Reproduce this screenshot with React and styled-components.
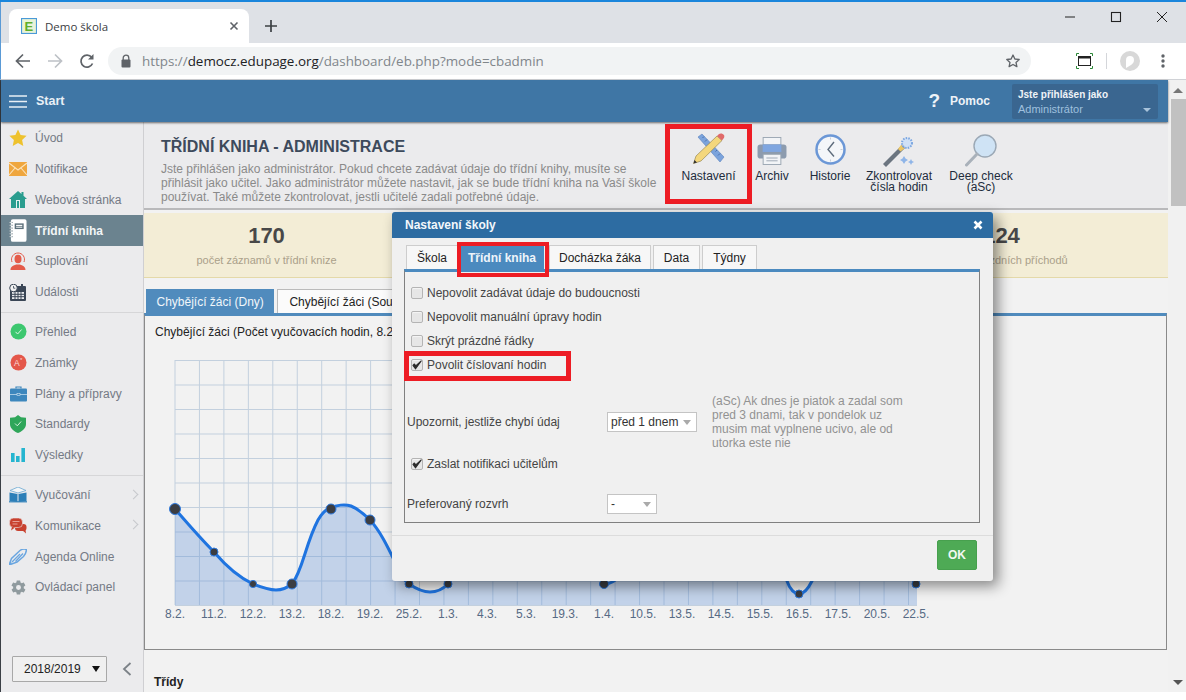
import React from "react";
import styled, { createGlobalStyle, css } from "styled-components";

const Global = createGlobalStyle`
  html, body { margin: 0; padding: 0; background: #fff; overflow: hidden; }
  * { box-sizing: border-box; }
  body { font-family: "Liberation Sans", Arial, sans-serif; font-size: 12px; color: #222; }
`;

const mark = css`
  position: relative;
  &::after {
    content: "";
    position: absolute;
    inset: ${(p) => p.$inset};
    border: ${(p) => p.$thick || "4.5px"} solid #ed1c24;
    pointer-events: none;
    z-index: 5;
  }
`;

const Root = styled.div`
  position: relative;
  width: 1186px;
  height: 692px;
  overflow: hidden;
  border-top: 2px solid #1a86dc;
  display: flex;
  flex-direction: column;
`;
const TabStrip = styled.div`
  height: 41px;
  flex: none;
  background: #dee1e6;
  border-left: 1px solid #5a9ad6;
  display: flex;
  align-items: flex-end;
  padding-left: 8px;
`;
const BrowserTab = styled.div`
  width: 240px;
  height: 34px;
  background: #fff;
  border-radius: 8px 8px 0 0;
  display: flex;
  align-items: center;
  padding: 0 10px 0 12px;
  font-family: "Open Sans", sans-serif;
  font-size: 11.5px;
  color: #3c4043;
  gap: 8px;
`;
const TabTitle = styled.span`
  flex: 1;
`;
const NewTab = styled.div`
  width: 44px;
  height: 34px;
  display: flex;
  align-items: center;
  justify-content: center;
`;
const WinControls = styled.div`
  margin-left: auto;
  height: 100%;
  display: flex;
  align-items: flex-start;
  padding-top: 8px;
`;
const WinButton = styled.div`
  width: ${(p) => p.$w}px;
  height: 14px;
  display: flex;
  align-items: center;
  justify-content: center;
`;
const BrowserBar = styled.div`
  height: 37px;
  flex: none;
  background: #fff;
  border-left: 1px solid #5a9ad6;
  border-bottom: 1px solid #d0d2d6;
  display: flex;
  align-items: center;
  padding-bottom: 1px;
`;
const NavButton = styled.div`
  width: 32px;
  height: 28px;
  display: flex;
  align-items: center;
  justify-content: center;
`;
const NavGroup = styled.div`
  display: flex;
  padding-left: 6px;
  margin-right: 5px;
`;
const Address = styled.div`
  width: 923px;
  height: 28px;
  background: #f1f3f4;
  border-radius: 14px;
  display: flex;
  align-items: center;
  padding: 0 10px 0 12px;
  font-family: "Open Sans", sans-serif;
  font-size: 13.4px;
  color: #80868b;
`;
const UrlText = styled.span`
  margin-left: 10px;
  flex: 1;
  white-space: nowrap;
`;
const UrlHost = styled.span`
  color: #202124;
`;
const ExtGroup = styled.div`
  display: flex;
  align-items: center;
  margin-left: 45px;
`;
const ExtDivider = styled.div`
  width: 1px;
  height: 16px;
  background: #d4d6da;
  margin: 0 13px 0 13px;
`;
const MenuDots = styled.span`
  display: flex;
  margin-left: 11px;
`;
const ViewRow = styled.div`
  flex: 1;
  min-height: 0;
  display: flex;
  border-left: 1px solid #3a3f45;
  border-bottom: 0;
`;
const Page = styled.div`
  flex: 1;
  min-width: 0;
  display: flex;
  flex-direction: column;
  background: #f2f2f2;
`;
const Header = styled.header`
  height: 42px;
  flex: none;
  background: #3f76a5;
  box-shadow: 0 1px 2px rgba(0, 0, 0, 0.55);
  display: flex;
  align-items: center;
  color: #fff;
  padding: 0 10px 0 8px;
  position: relative;
  z-index: 2;
`;
const Start = styled.div`
  margin-left: 9px;
  font-size: 12.5px;
  font-weight: bold;
  color: #e9f0f6;
`;
const Help = styled.div`
  margin-left: auto;
  display: flex;
  align-items: center;
  font-weight: bold;
  color: #eef3f8;
`;
const HelpMark = styled.span`
  font-size: 19px;
  margin-right: 10px;
`;
const UserBox = styled.div`
  width: 146px;
  height: 35px;
  margin-left: 22px;
  background: #3a6690;
  border-radius: 2px;
  padding: 4px 6px;
  position: relative;
  line-height: 14px;
`;
const UserTop = styled.div`
  font-size: 10px;
  font-weight: bold;
  color: #f0f4f8;
`;
const UserName = styled.div`
  font-size: 11px;
  color: #9fc0de;
  line-height: 15px;
`;
const UserCaret = styled.span`
  position: absolute;
  right: 7px;
  bottom: 7px;
  border: 4px solid transparent;
  border-top: 4px solid #a8c3db;
  border-bottom: 0;
`;
const Body = styled.div`
  flex: 1;
  min-height: 0;
  display: flex;
`;
const Sidebar = styled.nav`
  width: 143px;
  flex: none;
  background: #ebebed;
  border-right: 1px solid #cfcfd2;
  display: flex;
  flex-direction: column;
  padding-top: 0.8px;
`;
const NavItem = styled.div`
  height: 30.8px;
  display: flex;
  align-items: center;
  padding-left: 8px;
  gap: 8px;
  font-size: 12px;
  color: ${(p) => (p.$active ? "#f2f5f6" : "#747a85")};
  font-weight: ${(p) => (p.$active ? "bold" : "normal")};
  background: ${(p) => (p.$active ? "#6b838f" : "transparent")};
  position: relative;
`;
const NavIcon = styled.span`
  width: 18px;
  height: 18px;
  flex: none;
  display: flex;
  align-items: center;
  justify-content: center;
`;
const NavArrow = styled.span`
  position: absolute;
  left: 129px;
  top: 11px;
  width: 7px;
  height: 7px;
  border-top: 1px solid #c6c8cc;
  border-right: 1px solid #c6c8cc;
  transform: rotate(45deg);
`;
const NavRule = styled.div`
  height: 1px;
  margin: 4px 0;
  background: #d6d6d8;
`;
const YearRow = styled.div`
  margin-top: auto;
  padding: 0 0 10px 11px;
  display: flex;
  align-items: center;
`;
const YearSelect = styled.div`
  width: 95px;
  height: 26px;
  border: 1px solid #a8a8a8;
  border-radius: 1px;
  background: #f0f0f0;
  display: flex;
  align-items: center;
  justify-content: space-between;
  padding: 0 6px 0 11px;
  font-size: 12px;
  color: #222;
`;
const YearCaret = styled.span`
  border: 4px solid transparent;
  border-top: 6px solid #111;
  border-bottom: 0;
`;
const Collapse = styled.span`
  margin-left: 15px;
  display: flex;
`;
const Main = styled.main`
  flex: 1;
  min-width: 0;
  display: flex;
  flex-direction: column;
  overflow: hidden;
`;
const Head = styled.section`
  height: 88px;
  flex: none;
  display: flex;
  background: #ebebed;
  border-bottom: 2px solid #b9b9bb;
`;
const HeadText = styled.div`
  width: 521px;
  flex: none;
  padding: 16px 0 0 17px;
`;
const Title = styled.h1`
  margin: 0;
  font-size: 16px;
  line-height: 18px;
  font-weight: bold;
  color: #3d4a5c;
`;
const Desc = styled.p`
  margin: 6px 0 0;
  width: 500px;
  font-size: 12px;
  line-height: 14px;
  color: #8a8a8a;
`;
const Tools = styled.div`
  display: flex;
  align-items: flex-start;
`;
const Tool = styled.div`
  width: ${(p) => p.$w}px;
  height: 80px;
  margin-top: 2px;
  display: flex;
  flex-direction: column;
  align-items: center;
  padding-top: 7px;
  text-align: center;
  font-size: 12px;
  line-height: 11px;
  color: #222c3c;
  ${(p) => p.$marked && mark}
`;
const ToolIcon = styled.span`
  height: 36px;
  padding-top: ${(p) => p.$down || 0}px;
  display: flex;
  align-items: center;
  justify-content: center;
  margin-bottom: 4px;
`;
const StatBand = styled.section`
  margin-top: 3px;
  height: 65px;
  flex: none;
  background: #f3edd6;
  border-bottom: 1px solid #e4d9a9;
  display: grid;
  grid-template-columns: repeat(4, 245px);
`;
const Stat = styled.div`
  grid-column: ${(p) => p.$col};
  text-align: center;
  padding-top: 10px;
`;
const StatValue = styled.div`
  font-size: 22px;
  line-height: 26px;
  font-weight: bold;
  color: #484848;
`;
const StatLabel = styled.div`
  margin-top: 5px;
  padding-left: ${(p) => p.$shift || 0}px;
  font-size: 11px;
  line-height: 13px;
  color: #aaa08a;
`;
const PageTabs = styled.div`
  margin-top: 11px;
  height: 24px;
  flex: none;
  display: flex;
  padding-left: 2px;
  gap: 3px;
`;
const PageTab = styled.div`
  height: 24px;
  padding: 0 ${(p) => (p.$active ? "9.5px" : "11px")};
  display: flex;
  align-items: center;
  font-size: 12px;
  white-space: nowrap;
  color: ${(p) => (p.$active ? "#f1f6fa" : "#222")};
  background: ${(p) => (p.$active ? "#508bbd" : "#fbfbfb")};
  border: 1px solid ${(p) => (p.$active ? "#508bbd" : "#bbb")};
  border-bottom: 0;
`;
const ChartPanel = styled.section`
  height: 337px;
  flex: none;
  margin-right: 1px;
  border: 1px solid #8a8a8a;
  border-top: 3px solid #508bbd;
  background: #f2f2f2;
`;
const ChartTitle = styled.div`
  padding: 9px 0 0 10px;
  line-height: 14px;
  font-size: 12px;
  color: #222;
  white-space: nowrap;
`;
const ChartSvg = styled.svg`
  display: block;
  margin: 13px 0 0 20px;
`;
const SectionHead = styled.div`
  margin: 25px 0 0 10px;
  font-size: 12px;
  line-height: 14px;
  font-weight: bold;
  color: #222;
`;
const Scrollbar = styled.div`
  width: 18px;
  flex: none;
  background: #f1f1f1;
  display: flex;
  flex-direction: column;
  align-items: center;
  padding: 8px 0 7px;
`;
const ScrollUp = styled.span`
  border: 5px solid transparent;
  border-bottom: 5px solid #777;
  border-top: 0;
  margin-left: 2px;
`;
const ScrollDown = styled.span`
  border: 5px solid transparent;
  border-top: 5px solid #555;
  border-bottom: 0;
  margin: auto 0 0 2px;
`;
const ScrollThumb = styled.div`
  width: 15px;
  height: 107px;
  margin: 6px 0 0 3px;
  background: #c1c1c1;
`;
const Modal = styled.div`
  position: absolute;
  left: 392px;
  top: 210px;
  width: 601px;
  height: 369px;
  z-index: 10;
  background: #f0f0f0;
  border-radius: 3px;
  box-shadow: 5px 5px 14px rgba(0, 0, 0, 0.45);
  display: flex;
  flex-direction: column;
`;
const ModalHead = styled.div`
  height: 26px;
  flex: none;
  background: #2d6ca2;
  border-radius: 3px 3px 0 0;
  display: flex;
  align-items: center;
  justify-content: space-between;
  padding: 0 10px 0 13px;
  color: #f3f7fb;
  font-size: 12px;
  font-weight: bold;
`;
const ModalTabs = styled.div`
  display: flex;
  margin: 7px 0 0 14px;
  height: 24px;
  gap: 2px;
`;
const ModalTab = styled.div`
  width: ${(p) => p.$w}px;
  margin-left: ${(p) => p.$gap || 0}px;
  display: flex;
  align-items: center;
  justify-content: center;
  font-size: 12px;
  color: ${(p) => (p.$active ? "#eef4fa" : "#222")};
  font-weight: ${(p) => (p.$active ? "bold" : "normal")};
  background: ${(p) => (p.$active ? "#4b8abf" : "#f7f7f7")};
  border: 1px solid ${(p) => (p.$active ? "#4b8abf" : "#cdcdcd")};
  border-bottom: 0;
  ${(p) => p.$marked && mark}
`;
const ModalPanel = styled.div`
  margin: 0 13px 0 12px;
  height: 254px;
  flex: none;
  border: 1px solid #808080;
  border-top: 3px solid #4b8abf;
  padding: 9px 0 0 2px;
`;
const CheckRow = styled.div`
  height: 24px;
  margin-top: ${(p) => p.$top || 0}px;
  display: flex;
  align-items: center;
  padding-left: 4px;
  gap: 4px;
  color: #444;
  font-size: 12px;
  ${(p) => p.$marked && mark}
`;
const CheckBox = styled.span`
  width: 12px;
  height: 12px;
  flex: none;
  border: 1px solid #b4b4b4;
  border-radius: 2px;
  background: #e6e6e6;
  box-shadow: inset 0 1px 1px #f6f6f6;
  display: flex;
  align-items: center;
  justify-content: center;
`;
const FieldRow = styled.div`
  display: flex;
  align-items: center;
  margin-top: ${(p) => p.$top}px;
  color: #444;
`;
const FieldLabel = styled.div`
  width: 200px;
  flex: none;
  font-size: 12px;
`;
const Select = styled.div`
  width: ${(p) => p.$w}px;
  height: 20px;
  flex: none;
  background: #fff;
  border: 1px solid #c4c4c4;
  display: flex;
  align-items: center;
  justify-content: space-between;
  padding: 0 5px 0 3px;
  color: #333;
  font-size: 12px;
`;
const SelectCaret = styled.span`
  border: 4px solid transparent;
  border-top: 5px solid #aaa;
  border-bottom: 0;
`;
const Hint = styled.div`
  margin-left: 15px;
  width: 205px;
  font-size: 12px;
  line-height: 14px;
  color: #929292;
`;
const ModalFoot = styled.div`
  margin-top: 12px;
  flex: 1;
  border-top: 1px solid #dcdcdc;
  padding: 4px 16px 0 0;
  display: flex;
  justify-content: flex-end;
  align-items: flex-start;
`;
const OkButton = styled.div`
  width: 40px;
  height: 30px;
  background: #4eaa55;
  border: 1px solid #47a04e;
  border-radius: 2px;
  color: #f2f8f2;
  font-size: 12px;
  font-weight: bold;
  display: flex;
  align-items: center;
  justify-content: center;
`;

const Tick = () => (
  <svg width="10" height="10" viewBox="0 0 10 10">
    <path d="M1 5.500 L3.600 8.800 L9.200 1 L3.800 5.800 L2.400 4 Z" fill="#2c2c2c" stroke="#2c2c2c" strokeWidth="1.100" strokeLinejoin="round" />
  </svg>
);

const icons = {
  star: (
    <svg width="18" height="18" viewBox="0 0 18 18"><path d="M9 0.500l2.600 5.600 6 .7-4.500 4.100 1.200 6L9 14l-5.300 2.900 1.200-6L.4 6.800l6-.7z" fill="#eec22e" /></svg>
  ),
  mail: (
    <svg width="18" height="14" viewBox="0 0 18 14"><rect width="18" height="14" fill="#efa63e" /><path d="M0 1l9 7 9-7M0 13l6-7M18 13l-6-7" fill="none" stroke="#fbe3bd" strokeWidth="1.100" /></svg>
  ),
  house: (
    <svg width="18" height="17" viewBox="0 0 18 17"><path d="M9 0l3.500 3V1h2v3.800L18 8h-2v9H2V8H0z" fill="#2a9d8f" /><rect x="7" y="9" width="4" height="8" fill="#e6f3f1" /><rect x="8" y="10" width="2" height="7" fill="#2a9d8f" /></svg>
  ),
  notebook: (
    <svg width="19" height="25" viewBox="0 0 19 25"><rect x="2" y="0.500" width="16.500" height="24" rx="2" fill="#fff" /><rect x="6" y="5" width="9.500" height="6" fill="#5b6f7a" /><rect x="7.500" y="6.500" width="6.500" height="1.200" fill="#fff" /><rect x="7.500" y="8.500" width="6.500" height="1" fill="#fff" /><path d="M0 4h4M0 7h4M0 10h4M0 13h4M0 16h4M0 19h4" stroke="#5b6f7a" strokeWidth="1" /><path d="M0.500 4h3M0.500 7h3M0.500 10h3M0.500 13h3M0.500 16h3M0.500 19h3" stroke="#fff" strokeWidth="0.800" /></svg>
  ),
  person: (
    <svg width="18" height="18" viewBox="0 0 18 18"><path d="M3 10a6.500 6.500 0 1 1 12 0" fill="none" stroke="#e45b4a" strokeWidth="1" /><ellipse cx="9" cy="7" rx="3.500" ry="4.300" fill="#e45b4a" /><path d="M1.500 18c0-3.500 3-4.500 5.500-5.500h4c2.500 1 5.500 2 5.500 5.500z" fill="#e45b4a" /></svg>
  ),
  calendar: (
    <svg width="18" height="17" viewBox="0 0 18 17"><rect x="1" y="2" width="16" height="15" rx="1" fill="#3a4656" /><rect x="3" y="8" width="12" height="7" fill="#e8eaee" /><path d="M6 8v7M9 8v7M12 8v7M3 10.300h12M3 12.700h12" stroke="#3a4656" strokeWidth="1" /><circle cx="4.500" cy="4" r="3.800" fill="#f2f2f2" stroke="#3a4656" strokeWidth="1" /><path d="M4.500 2v2.200H6.300" fill="none" stroke="#3a4656" strokeWidth="0.800" /><rect x="12" y="0" width="2" height="4" fill="#3a4656" /></svg>
  ),
  check: (
    <svg width="17" height="17" viewBox="0 0 17 17"><circle cx="8.500" cy="8.500" r="8" fill="#3cc76f" /><path d="M5.500 8.800l2.100 2.200 4-4.500" fill="none" stroke="#d9f5e3" strokeWidth="1" /></svg>
  ),
  grade: (
    <svg width="17" height="17" viewBox="0 0 17 17"><circle cx="8.500" cy="8.500" r="8" fill="#e4574a" /><text x="4" y="12" fontSize="8.500" fill="#fbdcd8" fontFamily="Liberation Sans">A</text><text x="10" y="8" fontSize="6" fill="#fbdcd8" fontFamily="Liberation Sans">*</text></svg>
  ),
  case: (
    <svg width="17" height="16" viewBox="0 0 17 16"><path d="M6 2.500V1h5v1.500" fill="none" stroke="#3d87bd" strokeWidth="1.200" /><rect y="2.500" width="17" height="13" rx="1" fill="#3d87bd" /><path d="M0 8.500h17" stroke="#d3e5f2" strokeWidth="0.700" /><rect x="7" y="7.500" width="3" height="2" fill="#3d87bd" stroke="#d3e5f2" strokeWidth="0.600" /></svg>
  ),
  shield: (
    <svg width="16" height="18" viewBox="0 0 16 18"><path d="M8 0l3 2.200 5 .5v6.500C16 13.500 11.500 16.500 8 18 4.500 16.500 0 13.500 0 9.200V2.700l5-.5z" fill="#2fa65a" /><path d="M5 8.500l2.300 2.300 3.800-4.300" fill="none" stroke="#d6f0df" strokeWidth="1" /></svg>
  ),
  bars: (
    <svg width="14" height="14" viewBox="0 0 14 14"><rect y="5" width="3.600" height="9" fill="#25b5d0" /><rect x="5" y="8" width="3.600" height="6" fill="#25b5d0" /><rect x="10.400" y="0" width="3.600" height="14" fill="#25b5d0" /></svg>
  ),
  book: (
    <svg width="18" height="16" viewBox="0 0 18 16"><path d="M9 0L1 3.500 9 6l8-2.500z" fill="#f4f6f8" stroke="#6aa7d2" strokeWidth="0.800" /><path d="M.5 5.500L8.500 7v8L.5 14zM17.500 5.500L9.500 7v8l8-1z" fill="#2d7fb8" /><path d="M0 14.800h18" stroke="#2d7fb8" strokeWidth="1.200" /></svg>
  ),
  chat: (
    <svg width="18" height="16" viewBox="0 0 18 16"><rect x="6" y="6" width="11.500" height="7" rx="3" fill="#c8412f" /><path d="M13 12l4 3.500-.5-3.500z" fill="#c8412f" /><rect x="0.500" y="0" width="13" height="9.500" rx="4" fill="#c8412f" stroke="#ebebed" strokeWidth="0.600" /><path d="M3 9l-1 3.500 4-3z" fill="#c8412f" /><path d="M3.500 3.500h7M3.500 6h5" stroke="#eeb5ad" strokeWidth="0.800" /></svg>
  ),
  quill: (
    <svg width="18" height="16" viewBox="0 0 18 16"><path d="M0 16l2.500-6.500L11 1.500c2-1.500 5-1.800 6.500-1-.2 2-1 5-3 7L8 13z" fill="none" stroke="#6aa6e0" strokeWidth="1.500" /><path d="M3 13L11 5M6.500 12.500L14 4.500" stroke="#6aa6e0" strokeWidth="1.300" /><path d="M0 16l3-1.500L1.500 12z" fill="#6aa6e0" /></svg>
  ),
  gear: (
    <svg width="17" height="17" viewBox="0 0 24 24"><path fill="#8f9a9e" d="M19.400 13c.04-.33.060-.66.060-1s-.02-.67-.06-1l2.100-1.650c.19-.15.24-.42.120-.64l-2-3.460c-.12-.22-.38-.3-.61-.22l-2.490 1a7.300 7.300 0 0 0-1.730-1l-.38-2.650A.49.490 0 0 0 13.900 2h-4c-.25 0-.46.18-.49.420l-.38 2.650c-.62.25-1.200.59-1.730 1l-2.490-1a.49.490 0 0 0-.61.220l-2 3.460c-.13.220-.07.490.12.640L4.500 11c-.04.330-.07.670-.07 1s.03.670.07 1l-2.100 1.650a.5.500 0 0 0-.12.640l2 3.460c.12.220.38.300.61.220l2.490-1c.53.410 1.100.750 1.730 1l.38 2.650c.03.240.24.420.49.420h4c.25 0 .46-.18.49-.42l.38-2.650c.62-.25 1.200-.59 1.730-1l2.490 1c.23.090.49 0 .61-.22l2-3.460a.5.500 0 0 0-.12-.64zM12 15.500a3.500 3.500 0 1 1 0-7 3.500 3.500 0 0 1 0 7z" /></svg>
  ),
};

const navTop = [
  ["star", "Úvod"],
  ["mail", "Notifikace"],
  ["house", "Webová stránka"],
  ["notebook", "Třídní kniha", true],
  ["person", "Suplování"],
  ["calendar", "Události"],
];
const navMid = [
  ["check", "Přehled"],
  ["grade", "Známky"],
  ["case", "Plány a přípravy"],
  ["shield", "Standardy"],
  ["bars", "Výsledky"],
];
const navBottom = [
  ["book", "Vyučování", false, true],
  ["chat", "Komunikace", false, true],
  ["quill", "Agenda Online"],
  ["gear", "Ovládací panel"],
];

const renderNav = (list) =>
  list.map(([icon, label, active, arrow]) => (
    <NavItem key={label} $active={active}>
      <NavIcon>{icons[icon]}</NavIcon>
      {label}
      {arrow && <NavArrow />}
    </NavItem>
  ));

const labels = ["8.2.", "11.2.", "12.2.", "13.2.", "18.2.", "19.2.", "25.2.", "1.3.", "4.3.", "5.3.", "19.3.", "1.4.", "10.5.", "13.5.", "14.5.", "15.5.", "16.5.", "17.5.", "20.5.", "22.5."];
const curve =
  "M175 509 C188 524 200 538 214 552 C226 566 238 577 253 584 C263 588 270 590 276 590 C283 590 287 588 292 584 C303 570 305 545 318 520 C322 513 326 509 331 508 C336 505 345 504 351 506 C358 509 364 514 370 520 C382 533 390 552 400 572 C403 578 406 582 409 584 C418 590 424 592 430 592 C437 592 443 589 448 584 C480 500 590 500 604 584 C610 584 614 582 622 574 C700 480 770 480 787 581 C790 590 795 594 799 594 C804 594 808 589 812 581 C840 500 900 500 915 584";
const dots = [[175, 509, 5.5], [214, 552, 4], [253, 584, 3.6], [292, 584, 5], [331, 509, 5], [370, 520, 5], [409, 584, 4], [448, 584, 4], [604, 584, 4.5], [799, 594, 4], [916, 584, 4]];
const gridX = Array.from({ length: 31 }, (_, i) => 175 + i * 24.45);
const gridY = Array.from({ length: 11 }, (_, i) => 360.5 + i * 24.5);

const Chart = () => (
  <ChartSvg width="790" height="275" viewBox="165 352 790 275">
    {gridX.map((x) => (
      <line key={x} x1={x} x2={x} y1="360" y2="605" stroke="#c3d0de" strokeWidth="1" />
    ))}
    {gridY.map((y) => (
      <line key={y} x1="175" x2="917" y1={y} y2={y} stroke="#c3d0de" strokeWidth="1" />
    ))}
    <path d={curve + " L917 584 L917 605 L175 605 Z"} fill="#5d8fd8" fillOpacity="0.32" />
    <path d={curve} fill="none" stroke="#1f74e0" strokeWidth="3" />
    {dots.map(([x, y, r]) => (
      <circle key={x} cx={x} cy={y} r={r} fill="#3b3d42" stroke="#2f7ade" strokeWidth="1" />
    ))}
    {labels.map((t, i) => (
      <text key={t} x={175 + i * 39} y="618" textAnchor="middle" fontSize="12" fontFamily="Liberation Sans" fill="#566a84">
        {t}
      </text>
    ))}
  </ChartSvg>
);

const PencilRuler = () => (
  <svg width="32" height="32" viewBox="0 0 32 32">
    <path d="M5 4l4-3 22 23-4 5z" fill="#7ba3dc" stroke="#5b83bd" strokeWidth="0.600" />
    <path d="M11 3.500l-1.500 1.500M14 6.500l-2 2M17 10l-1.500 1.500M20.500 13.500l-2 2M24 17l-1.500 1.500M27 20.500l-2 2" stroke="#3f64a0" strokeWidth="0.800" />
    <path d="M0.500 30.500L3 23 24 3l5 4.500L8 28z" fill="#f4d77c" stroke="#8a7a48" strokeWidth="0.600" />
    <path d="M0.500 30.500l1-3.500 2.500 2.500z" fill="#333" />
    <path d="M24 3l2-2c1.500-1 4-.5 5 1 .5 1 .5 2.500-.500 3.500l-1.500 2z" fill="#e06a6a" />
  </svg>
);
const Printer = () => (
  <svg width="30" height="28" viewBox="0 0 32 30">
    <rect x="6.500" y="0.500" width="19" height="8" fill="#f2f4f7" stroke="#9aa5b1" />
    <rect x="0.500" y="8" width="31" height="15" rx="3" fill="#8c9bae" />
    <rect x="6" y="8" width="20" height="8" fill="#7fa6e0" />
    <rect x="6.500" y="18.500" width="19" height="11" fill="#f2f4f7" stroke="#9aa5b1" />
    <path d="M10 22.500h12M10 25.500h12" stroke="#9aa5b1" />
  </svg>
);
const Clock = () => (
  <svg width="31" height="31" viewBox="0 0 31 31">
    <circle cx="15.500" cy="15.500" r="14" fill="#f4f6f9" stroke="#6b97d6" strokeWidth="2.500" />
    <path d="M15.500 3.500v2M15.500 25.500v2M3.500 15.500h2M25.500 15.500h2" stroke="#c5cdd8" strokeWidth="1" />
    <path d="M19 8l-6 7.500 6 7" fill="none" stroke="#5e6c7c" strokeWidth="1.400" />
  </svg>
);
const Wand = () => (
  <svg width="34" height="32" viewBox="0 0 34 32">
    <path d="M1 29L20 10l3 3L4 32z" fill="#6b7580" />
    <path d="M16 14l3-4 3.500 3.500-4 3z" fill="#ecc664" />
    <circle cx="25" cy="8" r="5" fill="#cfe0f7" stroke="#7ba6e0" strokeDasharray="1.500 1.200" strokeWidth="2" />
    <path d="M22 21l1.500 2.500L26 25l-2.500 1.500L22 29l-1.500-2.500L18 25l2.500-1.500zM29 24l1 2 2 1-2 1-1 2-1-2-2-1 2-1z" fill="#8fb5e8" />
  </svg>
);
const Magnifier = () => (
  <svg width="32" height="33" viewBox="0 0 32 33">
    <circle cx="20" cy="12" r="11" fill="#cfe3f5" stroke="#9ba8b5" strokeWidth="1.400" />
    <path d="M12 20L1.500 31" stroke="#a9b1ba" strokeWidth="3" strokeLinecap="round" />
  </svg>
);

export default function App() {
  return (
    <>
      <Global />
      <Root>
        <TabStrip>
          <BrowserTab>
            <svg width="16" height="16" viewBox="0 0 16 16">
              <rect x="0.500" y="0.500" width="15" height="15" fill="#e9f3d8" stroke="#4a9ad8" strokeWidth="1.200" />
              <text x="3.500" y="13" fontSize="13" fontWeight="bold" fontFamily="Liberation Sans" fill="#5fae2a">E</text>
            </svg>
            <TabTitle>Demo škola</TabTitle>
            <svg width="10" height="10" viewBox="0 0 10 10">
              <path d="M1.500 1.500l7 7M8.500 1.500l-7 7" stroke="#5f6368" strokeWidth="1.600" />
            </svg>
          </BrowserTab>
          <NewTab>
            <svg width="14" height="14" viewBox="0 0 14 14">
              <path d="M7 1v12M1 7h12" stroke="#3c4043" strokeWidth="1.700" />
            </svg>
          </NewTab>
          <WinControls>
            <WinButton $w={46}>
              <svg width="12" height="2"><path d="M1 1h10" stroke="#222" /></svg>
            </WinButton>
            <WinButton $w={46}>
              <svg width="12" height="12"><rect x="1.500" y="1.500" width="9" height="9" fill="none" stroke="#222" strokeWidth="1.100" /></svg>
            </WinButton>
            <WinButton $w={46}>
              <svg width="12" height="12"><path d="M1 1l10 10M11 1L1 11" stroke="#222" /></svg>
            </WinButton>
            <WinButton $w={1} />
          </WinControls>
        </TabStrip>
        <BrowserBar>
          <NavGroup>
            <NavButton>
              <svg width="16" height="16" viewBox="0 0 16 16"><path d="M15 8H2M8 1.500L1.500 8 8 14.500" fill="none" stroke="#5f6368" strokeWidth="1.700" /></svg>
            </NavButton>
            <NavButton>
              <svg width="16" height="16" viewBox="0 0 16 16"><path d="M1 8h13M8 1.500L14.500 8 8 14.500" fill="none" stroke="#bdc1c6" strokeWidth="1.700" /></svg>
            </NavButton>
            <NavButton>
              <svg width="16" height="16" viewBox="0 0 16 16"><path d="M13.500 10.500a6 6 0 1 1-.8-6.100" fill="none" stroke="#5f6368" strokeWidth="1.700" /><path d="M14.500 1v5.500H9z" fill="#5f6368" /></svg>
            </NavButton>
          </NavGroup>
          <Address>
            <svg width="12" height="14" viewBox="0 0 12 14">
              <path d="M3.200 6V4a2.800 2.800 0 0 1 5.600 0v2" fill="none" stroke="#5f6368" strokeWidth="1.300" />
              <rect x="1.500" y="5.500" width="9" height="8" rx="1" fill="#5f6368" />
            </svg>
            <UrlText>
              https://<UrlHost>democz.edupage.org</UrlHost>/dashboard/eb.php?mode=cbadmin
            </UrlText>
            <svg width="16" height="16" viewBox="0 0 24 24">
              <path d="M12 3l2.800 6 6.500.7-4.800 4.400 1.300 6.400L12 17.300 6.200 20.500l1.300-6.400L2.700 9.700 9.200 9z" fill="none" stroke="#5f6368" strokeWidth="2" strokeLinejoin="round" />
            </svg>
          </Address>
          <ExtGroup>
            <svg width="17" height="16" viewBox="0 0 17 16">
              <path d="M0.500 3V0.500H3M14 0.500h2.500V3M0.500 13v2.500H3M14 15.500h2.500V13" fill="none" stroke="#2e8b3a" />
              <rect x="2.500" y="3.500" width="12" height="9" fill="none" stroke="#222" />
              <rect x="2.500" y="3.500" width="12" height="2" fill="#222" />
            </svg>
            <ExtDivider />
            <svg width="20" height="20" viewBox="0 0 20 20">
              <circle cx="10" cy="10" r="10" fill="#d8d8d8" />
              <path d="M6 17V9a4 4 0 0 1 8 0c0 3-2 4-3 5" fill="#fff" />
            </svg>
            <MenuDots>
              <svg width="24" height="16" viewBox="0 0 24 16">
                <circle cx="12" cy="3" r="1.700" fill="#5f6368" />
                <circle cx="12" cy="8" r="1.700" fill="#5f6368" />
                <circle cx="12" cy="13" r="1.700" fill="#5f6368" />
              </svg>
            </MenuDots>
          </ExtGroup>
        </BrowserBar>
        <ViewRow>
          <Page>
            <Header>
              <svg width="18" height="13" viewBox="0 0 18 13">
                <path d="M0 1h18M0 6.500h18M0 12h18" stroke="#e8eff5" strokeWidth="1.500" />
              </svg>
              <Start>Start</Start>
              <Help>
                <HelpMark>?</HelpMark>
                Pomoc
              </Help>
              <UserBox>
                <UserTop>Jste přihlášen jako</UserTop>
                <UserName>Administrátor</UserName>
                <UserCaret />
              </UserBox>
            </Header>
            <Body>
              <Sidebar>
                {renderNav(navTop)}
                <NavRule />
                {renderNav(navMid)}
                <NavRule />
                {renderNav(navBottom)}
                <YearRow>
                  <YearSelect>
                    2018/2019
                    <YearCaret />
                  </YearSelect>
                  <Collapse>
                    <svg width="10" height="14" viewBox="0 0 10 14">
                      <path d="M8.500 1L2 7l6.500 6" fill="none" stroke="#7c8288" strokeWidth="1.800" />
                    </svg>
                  </Collapse>
                </YearRow>
              </Sidebar>
              <Main>
                <Head>
                  <HeadText>
                    <Title>TŘÍDNÍ KNIHA - ADMINISTRACE</Title>
                    <Desc>
                      Jste přihlášen jako administrátor. Pokud chcete zadávat údaje do třídní knihy, musíte se přihlásit jako učitel. Jako administrátor můžete nastavit, jak se bude třídní kniha na Vaší škole používat. Také můžete zkontrolovat, jestli učitelé zadali potřebné údaje.
                    </Desc>
                  </HeadText>
                  <Tools>
                    <Tool $w={87} $marked $inset="0" $thick="5px">
                      <ToolIcon><PencilRuler /></ToolIcon>
                      Nastavení
                    </Tool>
                    <Tool $w={40}>
                      <ToolIcon $down={3}><Printer /></ToolIcon>
                      Archiv
                    </Tool>
                    <Tool $w={76}>
                      <ToolIcon><Clock /></ToolIcon>
                      Historie
                    </Tool>
                    <Tool $w={62}>
                      <ToolIcon $down={4}><Wand /></ToolIcon>
                      <span>Zkontrolovat<br />čísla hodin</span>
                    </Tool>
                    <Tool $w={102}>
                      <ToolIcon $down={3}><Magnifier /></ToolIcon>
                      <span>Deep check<br />(aSc)</span>
                    </Tool>
                  </Tools>
                </Head>
                <StatBand>
                  <Stat $col={1}>
                    <StatValue>170</StatValue>
                    <StatLabel>počet záznamů v třídní knize</StatLabel>
                  </Stat>
                  <Stat $col={4}>
                    <StatValue>124</StatValue>
                    <StatLabel $shift={12}>počet pozdních příchodů</StatLabel>
                  </Stat>
                </StatBand>
                <PageTabs>
                  <PageTab $active>Chybějící žáci (Dny)</PageTab>
                  <PageTab>Chybějící žáci (Souhrn)</PageTab>
                </PageTabs>
                <ChartPanel>
                  <ChartTitle>Chybějící žáci (Počet vyučovacích hodin, 8.2.–22.5.)</ChartTitle>
                  <Chart />
                </ChartPanel>
                <SectionHead>Třídy</SectionHead>
              </Main>
            </Body>
          </Page>
          <Scrollbar>
            <ScrollUp />
            <ScrollThumb />
            <ScrollDown />
          </Scrollbar>
        </ViewRow>
        <Modal>
          <ModalHead>
            Nastavení školy
            <svg width="10" height="10" viewBox="0 0 10 10">
              <path d="M1.500 1.500l7 7M8.500 1.500l-7 7" stroke="#fff" strokeWidth="2.600" />
            </svg>
          </ModalHead>
          <ModalTabs>
            <ModalTab $w={52}>Škola</ModalTab>
            <ModalTab $w={84} $active $marked $inset="-4px -6px -8px -4px">Třídní kniha</ModalTab>
            <ModalTab $w={102} $gap={3}>Docházka žáka</ModalTab>
            <ModalTab $w={47}>Data</ModalTab>
            <ModalTab $w={55}>Týdny</ModalTab>
          </ModalTabs>
          <ModalPanel>
            <CheckRow><CheckBox />Nepovolit zadávat údaje do budoucnosti</CheckRow>
            <CheckRow><CheckBox />Nepovolit manuální úpravy hodin</CheckRow>
            <CheckRow><CheckBox />Skrýt prázdné řádky</CheckRow>
            <CheckRow $marked $inset="-2px 408px -4px -3px" $thick="5px"><CheckBox><Tick /></CheckBox>Povolit číslovaní hodin</CheckRow>
            <FieldRow $top={17}>
              <FieldLabel>Upozornit, jestliže chybí údaj</FieldLabel>
              <Select $w={90}>před 1 dnem<SelectCaret /></Select>
              <Hint>(aSc) Ak dnes je piatok a zadal som pred 3 dnami, tak v pondelok uz musim mat vyplnene ucivo, ale od utorka este nie</Hint>
            </FieldRow>
            <CheckRow $top={2}><CheckBox><Tick /></CheckBox>Zaslat notifikaci učitelům</CheckRow>
            <FieldRow $top={18}>
              <FieldLabel>Preferovaný rozvrh</FieldLabel>
              <Select $w={50}>-<SelectCaret /></Select>
            </FieldRow>
          </ModalPanel>
          <ModalFoot>
            <OkButton>OK</OkButton>
          </ModalFoot>
        </Modal>
      </Root>
    </>
  );
}
